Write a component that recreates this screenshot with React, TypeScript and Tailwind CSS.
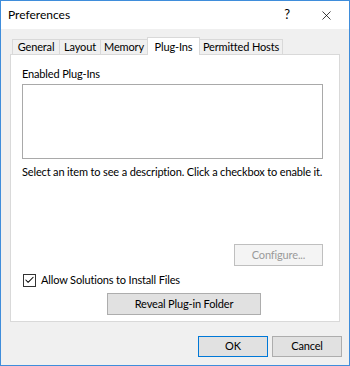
import { Check, X } from 'lucide-react';

const font = { fontFamily: 'Lato, "Noto Sans", sans-serif' };

function Tab({ label, w, active }: { label: string; w: string; active?: boolean }) {
  if (active) {
    return (
      <div
        className={`relative z-10 -mb-px -ml-px flex h-[18px] items-start justify-center border border-b-0 border-[#d9d9d9] bg-white pt-[1px] leading-[15px] text-black ${w}`}
      >
        {label}
      </div>
    );
  }
  return (
    <div
      className={`-ml-px flex h-[15px] items-center justify-center border border-b-0 border-[#d9d9d9] bg-[#f0f0f0] leading-[14px] text-black first:ml-0 ${w}`}
    >
      {label}
    </div>
  );
}

export default function App() {
  return (
    <div
      className="flex h-[366px] w-[350px] flex-col overflow-hidden border border-[#3f8ddb] bg-[#f0f0f0] text-[11px] tracking-[-0.15px] text-black"
      style={font}
    >
      {/* title bar */}
      <div className="flex h-[28px] shrink-0 items-center bg-white pl-[7px]">
        <span className="flex-1 text-[12px] tracking-normal">Preferences</span>
        <span className="w-[32px] text-center text-[13px]">?</span>
        <span className="flex w-[46px] items-center justify-center">
          <X size={15} strokeWidth={1.2} />
        </span>
      </div>

      <div className="flex flex-1 flex-col px-[9px] pt-[8px]">
        {/* tabs */}
        <div className="flex items-end pl-[2px]">
          <Tab label="General" w="w-[48px]" />
          <Tab label="Layout" w="w-[42px]" />
          <Tab label="Memory" w="w-[48px]" />
          <Tab label="Plug-Ins" w="w-[53px]" active />
          <Tab label="Permitted Hosts" w="w-[84px]" />
        </div>

        {/* panel */}
        <div className="flex h-[268px] w-[330px] flex-col border border-[#d9d9d9] bg-white px-[11px]">
          <div className="mt-[11px] leading-[16px]">Enabled Plug-Ins</div>
          <div className="mt-[2px] h-[75px] w-[301px] border border-[#a9a9a9] bg-white" />
          <div className="mt-[5px] whitespace-nowrap leading-[16px]">
            Select an item to see a description. Click a checkbox to enable it.
          </div>
          <div className="mt-[64px] flex w-[301px] justify-end">
            <div className="flex h-[22px] w-[89px] items-center justify-center border border-[#bfbfbf] bg-[#f4f4f4] text-[#9a9a9a]">
              Configure...
            </div>
          </div>
          <div className="mt-[6px] flex items-center gap-[5px] pl-px">
            <div className="flex h-[13px] w-[13px] items-center justify-center border border-[#333333] bg-white">
              <Check size={12} strokeWidth={2.2} className="text-black" />
            </div>
            <span className="leading-[16px]">Allow Solutions to Install Files</span>
          </div>
          <div className="mt-[5px] flex pl-[85px]">
            <div className="flex h-[22px] w-[154px] items-center justify-center border border-[#adadad] bg-[#e1e1e1]">
              Reveal Plug-in Folder
            </div>
          </div>
        </div>

        {/* footer */}
        <div className="-mr-[2px] mt-[14px] flex justify-end gap-[4px]">
          <div className="flex h-[21px] w-[70px] items-center justify-center border border-[#0078d7] bg-[#e1e1e1]">
            OK
          </div>
          <div className="flex h-[21px] w-[70px] items-center justify-center border border-[#adadad] bg-[#e1e1e1]">
            Cancel
          </div>
        </div>
      </div>
    </div>
  );
}
